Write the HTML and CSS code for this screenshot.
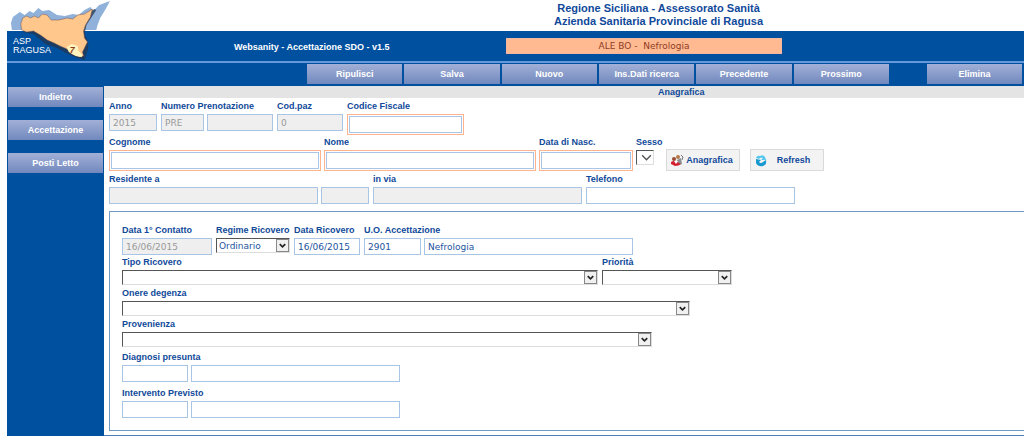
FILE: index.html
```html
<!DOCTYPE html>
<html lang="it">
<head>
<meta charset="utf-8">
<title>Websanity - Accettazione SDO</title>
<link rel="stylesheet" href="styles.css">
</head>
<body>
<svg class="defs" width="0" height="0" aria-hidden="true">
  <symbol id="chevron" viewBox="0 0 12 12"><path d="M3 4.500L6 7.500L9 4.500" fill="none" stroke="currentColor" stroke-width="1.800"/></symbol>
  <symbol id="chevron-thin" viewBox="0 0 12 12"><path d="M2 4L6 8L10 4" fill="none" stroke="#555" stroke-width="1.300"/></symbol>
</svg>
<div class="app">
  <header class="header">
    <h1 class="title">Regione Siciliana - Assessorato Sanità<br>Azienda Sanitaria Provinciale di Ragusa</h1>
    <svg class="logo" viewBox="0 0 104 62" preserveAspectRatio="none" role="img" aria-label="Mappa della Sicilia">
      <path fill="#8fb1da" d="M4 30L3 23L5 17L12 12L17 15L22 11L26 13L31 8L35 11L42 10L50 15L58 16L66 14L72 15L78 10L84 7L87 11L93 5L104 1L99 10L94 18L91 26L90 30Z"/>
      <path fill="#24354f" opacity=".75" d="M15 32L26 34L38 44L50 48L61 54L71 58L78 60L80 54L82 48L81 40L78 34L80 25L90 10L88 9L70 22Z"/>
      <path fill="#ffc78c" stroke="#75504a" stroke-width=".5" d="M14 30L13 24L15 18L19 16L23 18L27 16L31 18L35 14L40 15L44 20L52 20L60 18L66 19L71 15L78 14L86 9L84 17L79 25L77 31L78 38L81 42L78 48L76 52L77 56L73 57L65 54L60 49L53 46L47 43L40 40L33 35L26 31L19 32Z"/>
      <path fill="#fff4bd" d="M60 47L65 44L71 46L72 51L76 55L75 57L69 56L62 52Z"/>
      <text class="logo-number" x="63" y="53">7</text>
    </svg>
  </header>
  <div class="banner">
    <div class="brand">ASP<br>RAGUSA</div>
    <div class="product">Websanity - Accettazione SDO - v1.5</div>
    <div class="unit">ALE BO -&nbsp; Nefrologia</div>
  </div>
  <nav class="toolbar">
    <div class="toolbar-group">
      <button class="btn">Ripulisci</button>
      <button class="btn">Salva</button>
      <button class="btn">Nuovo</button>
      <button class="btn">Ins.Dati ricerca</button>
      <button class="btn">Precedente</button>
      <button class="btn">Prossimo</button>
    </div>
    <button class="btn">Elimina</button>
  </nav>
  <div class="body">
    <aside class="sidebar">
      <button class="btn">Indietro</button>
      <button class="btn">Accettazione</button>
      <button class="btn">Posti Letto</button>
    </aside>
    <main class="main">
      <h2 class="section-title">Anagrafica</h2>
      <form class="form">
        <div class="row">
          <div class="field"><label for="anno">Anno</label><input class="w-48" id="anno" value="2015" disabled></div>
          <div class="field"><label for="pren">Numero Prenotazione</label>
            <div class="pair"><input class="w-43" id="pren" value="PRE" disabled><input class="w-66" aria-label="Numero" disabled></div></div>
          <div class="field"><label for="cod">Cod.paz</label><input class="w-66" id="cod" value="0" disabled></div>
          <div class="field"><label for="cf">Codice Fiscale</label><span class="required"><input class="w-113" id="cf"></span></div>
        </div>
        <div class="row person">
          <div class="field"><label for="cognome">Cognome</label><span class="required"><input class="w-208" id="cognome"></span></div>
          <div class="field"><label for="nome">Nome</label><span class="required"><input class="w-208" id="nome"></span></div>
          <div class="field"><label for="nasc">Data di Nasc.</label><span class="required"><input class="w-90" id="nasc"></span></div>
          <div class="field"><label for="sesso">Sesso</label><span class="select flat w-18"><select id="sesso"><option></option></select><svg><use href="#chevron-thin"/></svg></span></div>
          <div class="actions">
            <button class="action" type="button">
              <svg viewBox="0 0 14 14"><circle cx="8" cy="4" r="2" fill="#b77a4b"/><path d="M7 7L11 5L12 11L8 12Z" fill="#8a9193"/><path d="M11 2L13 4L12 7" stroke="#777" fill="none"/><circle cx="4" cy="6" r="2" fill="#9a4b32"/><path d="M1 9Q4 7 7 9L11 11Q9 13 5 13L1 11Z" fill="#d3202e"/><path d="M4 8L6 11L8 8Z" fill="#fff"/></svg>
              <span>Anagrafica</span></button>
            <button class="action" type="button">
              <svg viewBox="0 0 14 14"><path d="M2 5Q3 2 6 3Q9 1 11 4L12 7L7 7L9 5Q6 4 5 6Z" fill="#55c7ed"/><path d="M2 6L7 7L5 9Q7 11 9 9L12 7Q13 12 9 13Q4 14 2 10Z" fill="#1899cf"/></svg>
              <span>Refresh</span></button>
          </div>
        </div>
        <div class="row address">
          <div class="field"><label for="res">Residente a</label>
            <div class="pair"><input class="w-209" id="res" disabled><input class="w-48" aria-label="Provincia" disabled></div></div>
          <div class="field"><label for="via">in via</label><input class="w-209" id="via" disabled></div>
          <div class="field"><label for="tel">Telefono</label><input class="w-209" id="tel"></div>
        </div>
        <section class="panel">
          <div class="row">
            <div class="field"><label for="cont">Data 1° Contatto</label><input class="w-90" id="cont" value="16/06/2015" disabled></div>
            <div class="field"><label for="reg">Regime Ricovero</label><span class="select w-74"><select id="reg"><option>Ordinario</option></select><svg><use href="#chevron"/></svg></span></div>
            <div class="field"><label for="ric">Data Ricovero</label><input class="w-66" id="ric" value="16/06/2015"></div>
            <div class="field"><label for="uo">U.O. Accettazione</label>
              <div class="pair"><input class="w-57" id="uo" value="2901"><input class="w-209" aria-label="Descrizione U.O." value="Nefrologia"></div></div>
          </div>
          <div class="row">
            <div class="field"><label for="tipo">Tipo Ricovero</label><span class="select w-476"><select id="tipo"><option></option></select><svg><use href="#chevron"/></svg></span></div>
            <div class="field"><label for="prio">Priorità</label><span class="select w-130"><select id="prio"><option></option></select><svg><use href="#chevron"/></svg></span></div>
          </div>
          <div class="row">
            <div class="field"><label for="onere">Onere degenza</label><span class="select w-568"><select id="onere"><option></option></select><svg><use href="#chevron"/></svg></span></div>
          </div>
          <div class="row">
            <div class="field"><label for="prov">Provenienza</label><span class="select w-530"><select id="prov"><option></option></select><svg><use href="#chevron"/></svg></span></div>
          </div>
          <div class="row spaced">
            <div class="field"><label for="diag">Diagnosi presunta</label>
              <div class="pair"><input class="w-66" id="diag"><input class="w-209" aria-label="Descrizione diagnosi"></div></div>
          </div>
          <div class="row spaced">
            <div class="field"><label for="int">Intervento Previsto</label>
              <div class="pair"><input class="w-66" id="int"><input class="w-209" aria-label="Descrizione intervento"></div></div>
          </div>
        </section>
      </form>
    </main>
  </div>
</div>
</body>
</html>
```
FILE: styles.css
```css
* { box-sizing: border-box; }
body {
  margin: 0;
  background: #fff;
  color: #10499a;
  font: bold 9px/12px "Liberation Sans", Arial, sans-serif;
  overflow-x: hidden;
}
button, input, select { font: inherit; color: inherit; margin: 0; }
.defs { position: absolute; }
.app { margin-left: 7px; }

.header { position: relative; height: 31px; padding: 2px 0 0 547px; }
.title {
  display: inline-block;
  margin: 0;
  font-size: 11px;
  line-height: 13px;
  text-align: center;
  white-space: nowrap;
}
.logo { position: absolute; left: 1px; top: 0; width: 102px; height: 62px; }
.logo-number { font: italic bold 9px "Liberation Sans", Arial, sans-serif; fill: #8b3c1c; }

.banner {
  display: flex;
  align-items: center;
  height: 32px;
  background: #0050a0;
  border-bottom: 2px solid #6497dc;
  color: #fff;
}
.brand { width: 227px; padding-left: 6px; font-weight: normal; line-height: 9px; }
.product { width: 272px; white-space: nowrap; padding-top: 2px; }
.unit {
  width: 276px;
  height: 16px;
  background: #ffba92;
  border: 1px solid #f3b6a0;
  color: #903a24;
  font: 9px/14px "DejaVu Sans", Verdana, sans-serif;
  text-align: center;
}

.toolbar { display: flex; gap: 38px; height: 23px; padding: 1px 0 0 300px; background: #0050a0; overflow: hidden; }
.toolbar-group { display: flex; gap: 2px; flex: 0 0 582px; }
.toolbar-group .btn { flex: 1; }
.btn {
  flex: none;
  width: 95px;
  height: 20px;
  padding: 0;
  border: 0;
  background: linear-gradient(#a1b0d7, #7288bd);
  color: #fff;
}

.body { display: flex; background: #0050a0; }
.sidebar { display: flex; flex-direction: column; gap: 13px; width: 97px; padding: 1px; flex: none; }
.main { flex: 1; min-width: 0; background: #fff; border-bottom: 1px solid #4f7fb8; }
.section-title {
  margin: 0;
  height: 12px;
  padding-left: 554px;
  background: #e4e4e4;
  font-size: 9px;
  line-height: 13px;
}

.form { padding: 2px 0 4px 5px; }
.row { display: flex; gap: 4px; height: 36px; }
.row.person { height: 37px; gap: 3px; }
.row.address { height: 38px; }
.field { display: flex; flex-direction: column; align-items: flex-start; gap: 2px; flex: none; }
.field label { height: 12px; white-space: nowrap; }
.pair { display: flex; gap: 3px; }
.form input {
  height: 17px;
  padding: 0 3px;
  border: 1px solid #a9c5e6;
  background: #fff;
  color: #1c549e;
  font: 9px "DejaVu Sans", Verdana, sans-serif;
}
.form input:disabled { background: #efefef; color: #999; }
.required { border: 1px solid #ffb48f; padding: 1px; display: flex; }

.select { position: relative; height: 15px; display: block; color: #222; }
.select select {
  display: block;
  width: 100%;
  height: 15px;
  padding: 0 2px;
  appearance: none;
  border: 1px solid #ddd;
  border-top-color: #555;
  border-left-color: #555;
  border-radius: 0;
  background: #fff;
  color: #1c549e;
  font: 9px "DejaVu Sans", Verdana, sans-serif;
}
.select svg {
  position: absolute;
  right: 1px;
  top: 1px;
  width: 13px;
  height: 13px;
  border: 1px solid #888;
  background: #f0f0f0;
  pointer-events: none;
}
.select.flat svg { border: 0; background: #fff; }

.actions { display: flex; gap: 10px; padding-top: 13px; }
.action {
  display: flex;
  align-items: center;
  width: 74px;
  height: 22px;
  padding: 0 3px;
  border: 1px solid #dadada;
  background: #f3f3f3;
}
.action svg { width: 14px; height: 14px; flex: none; }
.action span { flex: 1; text-align: center; }

.panel { border: 1px solid #6d9ac8; border-right: 0; padding: 12px 0 9px 12px; }
.panel .row { height: 31px; }
.panel .row:first-child { height: 32px; }
.panel .row.spaced { height: 36px; padding-top: 2px; }

.w-18 { width: 18px; }
.w-43 { width: 43px; }
.w-48 { width: 48px; }
.w-57 { width: 57px; }
.w-66 { width: 66px; }
.w-74 { width: 74px; }
.w-90 { width: 90px; }
.w-113 { width: 113px; }
.w-130 { width: 130px; }
.w-208 { width: 208px; }
.w-209 { width: 209px; }
.w-476 { width: 476px; }
.w-530 { width: 530px; }
.w-568 { width: 568px; }
```
